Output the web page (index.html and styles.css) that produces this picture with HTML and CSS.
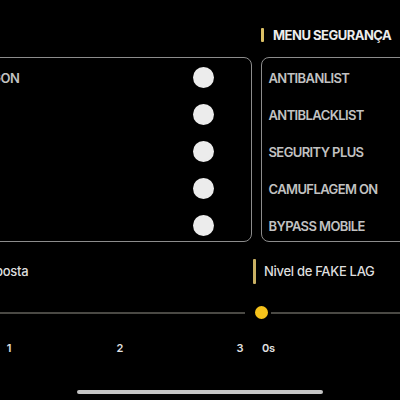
FILE: index.html
```html
<!DOCTYPE html>
<html lang="pt">
<head>
<meta charset="utf-8">
<title>Menu</title>
<link rel="stylesheet" href="styles.css">
</head>
<body>
<div class="screen">
  <div class="panels">
    <section class="col col-left">
      <h2 class="title"><span class="bar"></span>MENU AIM</h2>
      <div class="card">
        <div class="row"><span class="label">AIMBOT DRAGON</span><span class="knob"></span></div>
        <div class="row"><span class="label">AIM</span><span class="knob"></span></div>
        <div class="row"><span class="label">FOV</span><span class="knob"></span></div>
        <div class="row"><span class="label">ESP</span><span class="knob"></span></div>
        <div class="row"><span class="label">BOX</span><span class="knob"></span></div>
      </div>
    </section>
    <section class="col col-right">
      <h2 class="title"><span class="bar"></span>MENU SEGURANÇA</h2>
      <div class="card">
        <div class="row"><span class="label">ANTIBANLIST</span></div>
        <div class="row"><span class="label">ANTIBLACKLIST</span></div>
        <div class="row"><span class="label">SEGURITY PLUS</span></div>
        <div class="row"><span class="label">CAMUFLAGEM ON</span></div>
        <div class="row"><span class="label">BYPASS MOBILE</span></div>
      </div>
    </section>
  </div>
  <div class="sliders">
    <section class="scol scol-left">
      <h3 class="stitle"><span class="sbar"></span>Tempo de resposta</h3>
      <div class="track"><span class="line"></span></div>
      <div class="ticks">
        <span class="tick">0</span>
        <span class="tick tick-1">1</span>
        <span class="tick tick-2">2</span>
        <span class="tick tick-3">3</span>
      </div>
    </section>
    <section class="scol scol-right">
      <h3 class="stitle"><span class="sbar"></span>Nivel de FAKE LAG</h3>
      <div class="track"><span class="thumb"></span><span class="line"></span></div>
      <div class="ticks ticks-right">
        <span class="tick-s">0s</span>
      </div>
    </section>
  </div>
  <div class="home-wrap"><div class="home-bar"></div></div>
</div>
</body>
</html>
```

FILE: styles.css
```css
* { box-sizing: border-box; }
html, body {
  margin: 0;
  padding: 0;
  background: #000;
}
body {
  font-family: Inter, "Noto Sans", sans-serif;
  color: #e6e6e6;
}
.screen {
  width: 400px;
  height: 400px;
  overflow: hidden;
  position: relative;
}
.panels {
  display: flex;
  gap: 9px;
  padding-top: 25px;
  margin-left: -92px;
}
.col-left { width: 344px; flex: none; }
.col-right { width: 220px; flex: none; }
.title {
  margin: 0 0 12px;
  height: 20px;
  display: flex;
  align-items: center;
  font-size: 13px;
  font-weight: 700;
  letter-spacing: -0.5px;
  color: #ececec;
}
.bar {
  width: 3px;
  height: 14px;
  background: #dcc065;
  border-radius: 1px;
  margin-right: 9px;
}
.card {
  height: 185px;
  border: 1.5px solid #8c8c8c;
  border-radius: 8px;
  padding: 4.5px 0 0 6.5px;
  display: flex;
  flex-direction: column;
  gap: 7px;
}
.row {
  height: 30px;
  flex: none;
  display: flex;
  align-items: center;
  justify-content: space-between;
}
.label {
  font-size: 13px;
  font-weight: 600;
  letter-spacing: -0.6px;
  color: #c2c2c2;
}
.knob {
  width: 21px;
  height: 21px;
  border-radius: 50%;
  background: #ececec;
  margin-right: 37px;
}
.sliders {
  display: flex;
  gap: 7px;
  margin-top: 16px;
  margin-left: -98px;
}
.scol-left { width: 343px; flex: none; }
.scol-right { width: 200px; flex: none; }
.stitle {
  margin: 0;
  height: 26px;
  display: flex;
  align-items: center;
  font-size: 13px;
  font-weight: 500;
  letter-spacing: -0.3px;
  color: #dedede;
}
.sbar {
  width: 3px;
  height: 25px;
  background: #c9b063;
  border-radius: 1px;
  margin-left: 1px;
  margin-right: 8px;
}
.track {
  margin-top: 19px;
  height: 19px;
  display: flex;
  align-items: center;
}
.line {
  flex: 1;
  height: 2px;
  background: #4a4944;
}
.thumb {
  width: 19px;
  height: 19px;
  border-radius: 50%;
  background: #f5c21b;
  border: 3px solid #000;
  flex: none;
}
.ticks {
  margin-top: 19px;
  height: 14px;
  display: flex;
  justify-content: flex-end;
  font-size: 11px;
  font-weight: 600;
  line-height: 14px;
  color: #e2e2e2;
}
.tick {
  flex: none;
  width: 10px;
  text-align: center;
}
.tick-1, .tick-2 { margin-left: 101px; }
.tick-3 { margin-left: 110px; }
.ticks-right {
  justify-content: flex-start;
  padding-left: 10px;
}
.tick-s { letter-spacing: -0.3px; }
.home-wrap {
  position: absolute;
  left: 0;
  right: 0;
  bottom: 6px;
  display: flex;
  justify-content: center;
}
.home-bar {
  width: 246px;
  height: 4px;
  border-radius: 2px;
  background: #c4c4c4;
}
```
